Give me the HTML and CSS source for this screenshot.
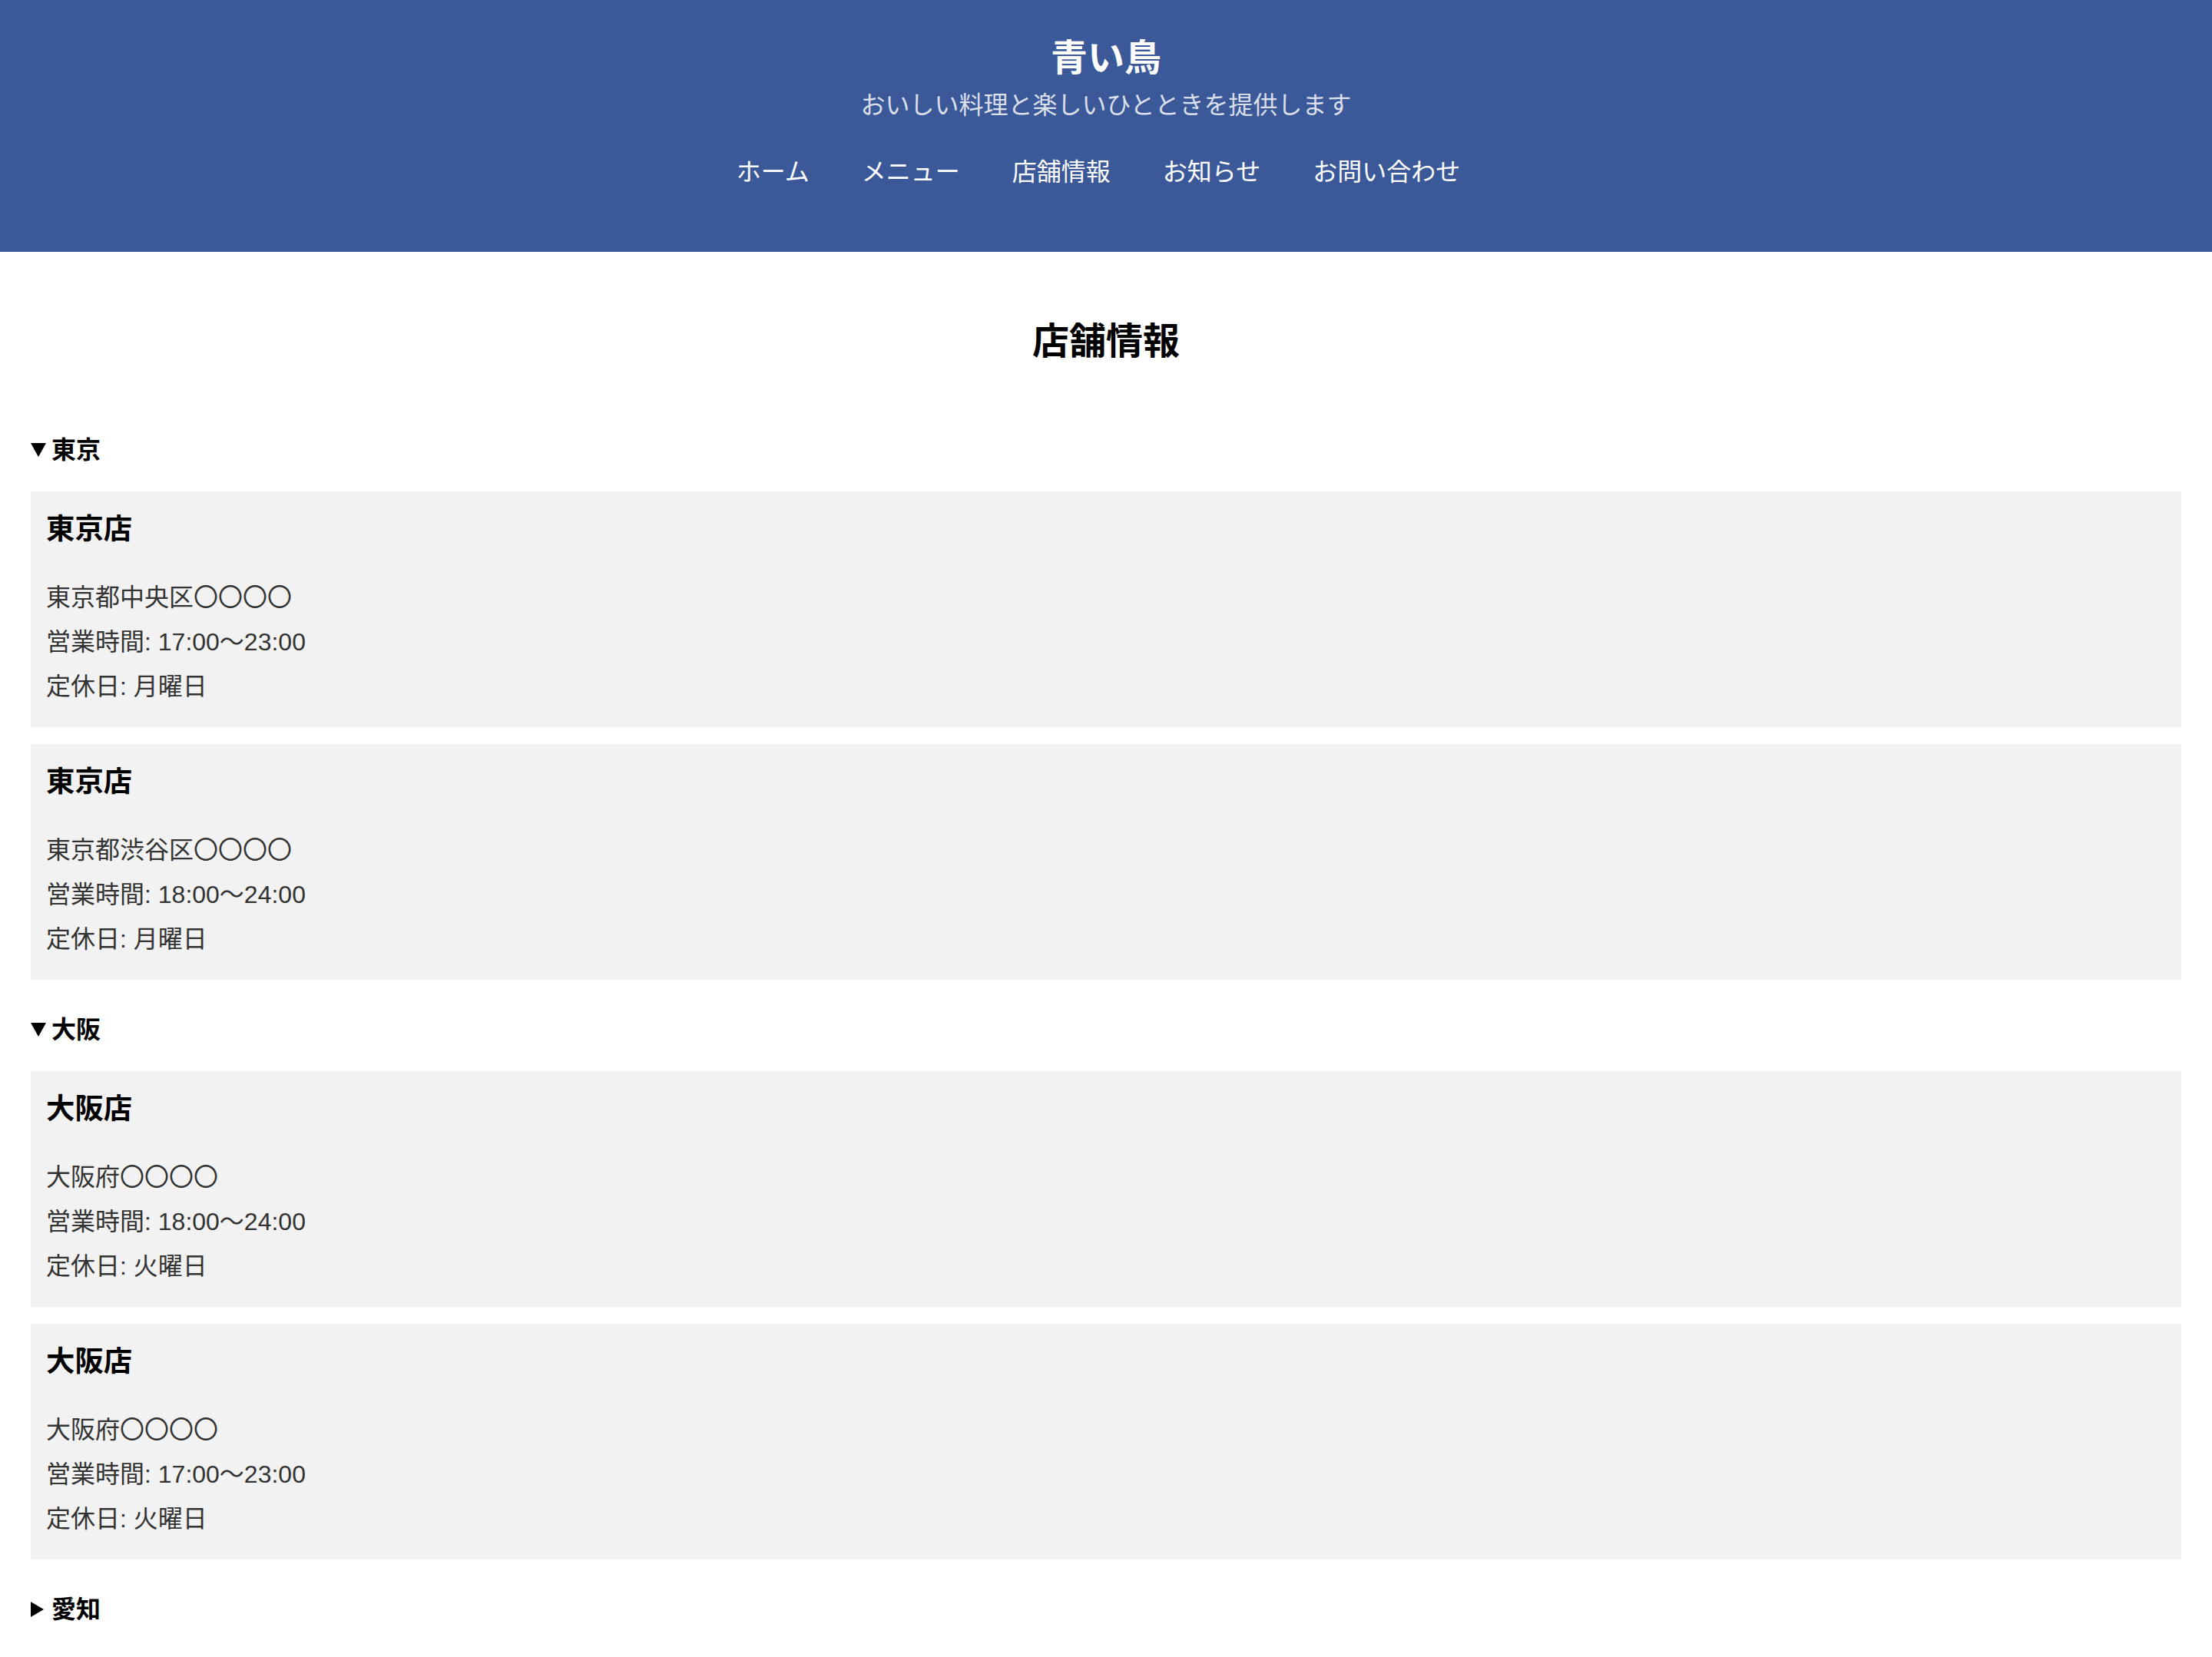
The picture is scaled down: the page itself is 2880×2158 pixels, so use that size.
FILE: index.html
```html
<!DOCTYPE html>
<html lang="ja">
<head>
<meta charset="utf-8">
<title>青い鳥 - 店舗情報</title>
<link rel="stylesheet" href="styles.css">
</head>
<body>
<header class="site-header">
  <h1 class="site-title">青い鳥</h1>
  <p class="site-tagline">おいしい料理と楽しいひとときを提供します</p>
  <nav class="site-nav">
    <ul class="nav-list">
      <li class="nav-item"><a class="nav-link" href="#">ホーム</a></li>
      <li class="nav-item"><a class="nav-link" href="#">メニュー</a></li>
      <li class="nav-item"><a class="nav-link" href="#">店舗情報</a></li>
      <li class="nav-item"><a class="nav-link" href="#">お知らせ</a></li>
      <li class="nav-item"><a class="nav-link" href="#">お問い合わせ</a></li>
    </ul>
  </nav>
</header>
<main class="content">
  <h2 class="page-title">店舗情報</h2>

  <details class="region" open>
    <summary class="region-name">東京</summary>
    <div class="store">
      <h3 class="store-name">東京店</h3>
      <p class="store-line">東京都中央区〇〇〇〇</p>
      <p class="store-line">営業時間: 17:00〜23:00</p>
      <p class="store-line">定休日: 月曜日</p>
    </div>
    <div class="store">
      <h3 class="store-name">東京店</h3>
      <p class="store-line">東京都渋谷区〇〇〇〇</p>
      <p class="store-line">営業時間: 18:00〜24:00</p>
      <p class="store-line">定休日: 月曜日</p>
    </div>
  </details>

  <details class="region" open>
    <summary class="region-name">大阪</summary>
    <div class="store">
      <h3 class="store-name">大阪店</h3>
      <p class="store-line">大阪府〇〇〇〇</p>
      <p class="store-line">営業時間: 18:00〜24:00</p>
      <p class="store-line">定休日: 火曜日</p>
    </div>
    <div class="store">
      <h3 class="store-name">大阪店</h3>
      <p class="store-line">大阪府〇〇〇〇</p>
      <p class="store-line">営業時間: 17:00〜23:00</p>
      <p class="store-line">定休日: 火曜日</p>
    </div>
  </details>

  <details class="region">
    <summary class="region-name">愛知</summary>
  </details>
</main>
</body>
</html>
```

FILE: styles.css
```css
html, body {
  margin: 0;
  padding: 0;
  background: #ffffff;
}

body {
  font-family: "Liberation Sans", "Noto Sans CJK JP", sans-serif;
  font-size: 32px;
  color: #000000;
}

.site-header {
  background: #3b5998;
  color: #ffffff;
  text-align: center;
  padding: 40px 0 81px;
}

.site-title {
  margin: 0;
  font-size: 48px;
  line-height: 72px;
  font-weight: bold;
}

.site-tagline {
  margin: 0;
  font-size: 32px;
  line-height: 50px;
  color: rgba(255, 255, 255, 0.82);
}

.site-nav {
  margin-top: 39px;
}

.nav-list {
  list-style: none;
  margin: 0;
  padding: 0 20px 0 0;
  display: flex;
  justify-content: center;
  gap: 68px;
}

.nav-item {
  line-height: 46px;
}

.nav-link {
  color: #ffffff;
  text-decoration: none;
  font-size: 32px;
}

.content {
  padding: 82px 40px 0;
}

.page-title {
  margin: 0 0 83px;
  font-size: 48px;
  line-height: 70px;
  font-weight: bold;
  text-align: center;
}

.region {
  margin: 0 0 42px;
}

.region-name {
  display: flex;
  align-items: center;
  gap: 7px;
  list-style: none;
  font-size: 32px;
  line-height: 46px;
  font-weight: bold;
  margin-bottom: 31px;
  cursor: pointer;
}

.region-name::-webkit-details-marker {
  display: none;
}

.region-name::before {
  content: "";
  display: block;
  width: 0;
  height: 0;
  border-left: 10px solid transparent;
  border-right: 10px solid transparent;
  border-top: 18px solid #000000;
}

.region:not([open]) > .region-name::before {
  border-top: 10.5px solid transparent;
  border-bottom: 10.5px solid transparent;
  border-left: 17px solid #000000;
  border-right: 0;
  margin-right: 3px;
}

.store {
  background: #f2f2f2;
  padding: 22px 20px 24px;
  margin-bottom: 22px;
}

.store-name {
  margin: 0 0 33px;
  font-size: 37.44px;
  line-height: 54px;
  font-weight: bold;
  color: #000000;
}

.store-line {
  margin: 0;
  font-size: 32px;
  line-height: 58px;
  color: #333333;
}
```
